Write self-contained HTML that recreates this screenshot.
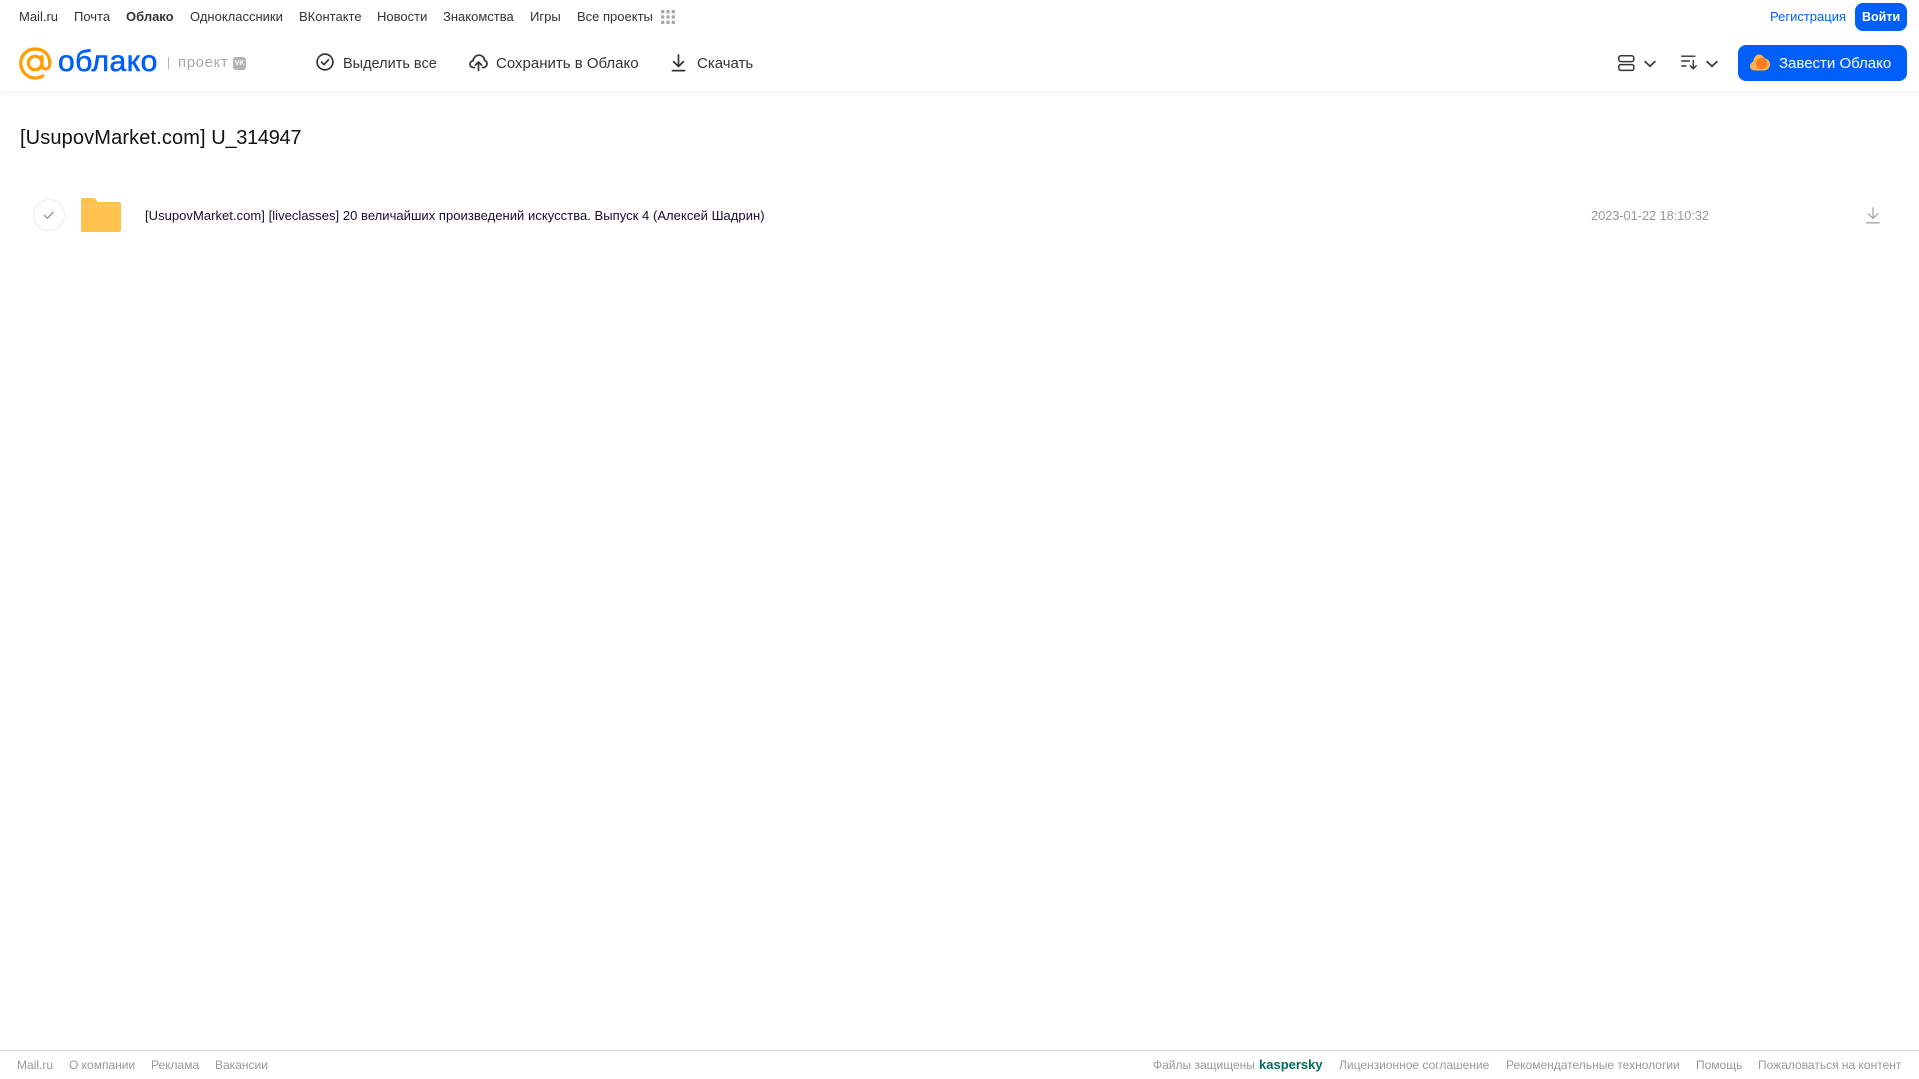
<!DOCTYPE html>
<html lang="ru">
<head>
<meta charset="utf-8">
<title>Облако</title>
<style>
html,body{margin:0;padding:0;background:#fff;}
body{position:relative;width:1919px;height:1079px;overflow:hidden;font-family:"Liberation Sans",Arial,sans-serif;}
.t{position:absolute;white-space:nowrap;line-height:16px;}
.n{top:9px;font-size:13px;color:#333;}
.a{top:56px;font-size:15px;color:#333;}
.f{top:1057px;font-size:12px;color:#999;}
svg{position:absolute;overflow:visible;}
#hdr{position:absolute;left:0;top:0;width:1919px;height:91px;background:#fff;box-shadow:0 1px 7px rgba(0,0,0,.08);}
#line{position:absolute;left:0;top:1050px;width:1919px;height:1px;background:#d9d9d9;}
.btn{position:absolute;background:#005ff9;border-radius:8px;}
</style>
</head>
<body>
<div id="hdr"></div>

<span class="t n" style="left:19px">Mail.ru</span>
<span class="t n" style="left:74px">Почта</span>
<span class="t n" style="left:126px;font-weight:bold">Облако</span>
<span class="t n" style="left:190px">Одноклассники</span>
<span class="t n" style="left:299px">ВКонтакте</span>
<span class="t n" style="left:377px">Новости</span>
<span class="t n" style="left:443px">Знакомства</span>
<span class="t n" style="left:530px">Игры</span>
<span class="t n" style="left:577px">Все проекты</span>
<svg style="left:661px;top:10px" width="14" height="14" viewBox="0 0 15 15" fill="#a8a8a8">
<rect x="0" y="0" width="3.6" height="3.6" rx=".8"/><rect x="5.7" y="0" width="3.6" height="3.6" rx=".8"/><rect x="11.4" y="0" width="3.6" height="3.6" rx=".8"/>
<rect x="0" y="5.7" width="3.6" height="3.6" rx=".8"/><rect x="5.7" y="5.7" width="3.6" height="3.6" rx=".8"/><rect x="11.4" y="5.7" width="3.6" height="3.6" rx=".8"/>
<rect x="0" y="11.4" width="3.6" height="3.6" rx=".8"/><rect x="5.7" y="11.4" width="3.6" height="3.6" rx=".8"/><rect x="11.4" y="11.4" width="3.6" height="3.6" rx=".8"/>
</svg>

<span class="t" style="left:1770px;top:9px;font-size:13px;color:#005ff9">Регистрация</span>
<div class="btn" style="left:1855px;top:3px;width:52px;height:28px"></div>
<span class="t" style="left:1862px;top:9px;font-size:12.5px;font-weight:bold;color:#fff">Войти</span>

<!-- logo -->
<svg style="left:19px;top:47px" width="33" height="33" viewBox="0 0 33 33" fill="none">
<circle cx="16.2" cy="16" r="6.8" stroke="#ff9e00" stroke-width="3.2"/>
<path d="M23 9.600v8.600c0 5.200 7.400 5.200 7.700-.8.600-9.600-5.800-15.400-14.500-15.400C7.700 2 1.800 8.400 1.800 16.200c0 8 6.300 14.800 14.400 14.800 2.900 0 5.400-.7 7.600-2.100" stroke="#ff9e00" stroke-width="3.200" stroke-linecap="round"/>
</svg>
<span class="t" style="left:58px;top:45px;line-height:34px;font-size:30px;color:#005ff9;font-weight:normal;-webkit-text-stroke:.6px #005ff9;letter-spacing:.5px">облако</span>
<div style="position:absolute;left:168px;top:57px;width:1px;height:12px;background:#b5b5b5"></div>
<span class="t" style="left:178px;top:55px;font-size:15px;color:#aaa;letter-spacing:.6px">проект</span>
<div style="position:absolute;left:233px;top:57px;width:13px;height:13px;background:#b3b3b3;border-radius:3px;color:#fff;font-size:7px;font-weight:bold;line-height:13px;text-align:center">VK</div>

<!-- actions -->
<svg style="left:316px;top:53px" width="18" height="18" viewBox="0 0 18 18" fill="none" stroke="#333" stroke-width="1.7" stroke-linecap="round" stroke-linejoin="round">
<circle cx="9" cy="9" r="7.9"/><path d="M5.6 9.2l2.4 2.400 4.400-4.800"/>
</svg>
<span class="t a" style="left:343px;font-size:14.5px">Выделить все</span>
<svg style="left:469px;top:54px" width="19" height="17" viewBox="0 0 19 17" fill="none" stroke="#333" stroke-width="1.7" stroke-linecap="round" stroke-linejoin="round">
<path d="M5.500 13.500H4.400C2.400 13.500 1 12 1 10.200c0-1.700 1.300-3.100 3-3.300C4.500 3.600 6.900 1.200 10 1.200c3 0 5.300 2.200 5.600 5.100 1.400.4 2.400 1.700 2.400 3.300 0 2.100-1.500 3.900-3.500 3.900h-1"/>
<path d="M9.500 16.500V8.200M6.400 11l3.100-3 3.100 3"/>
</svg>
<span class="t a" style="left:496px">Сохранить в Облако</span>
<svg style="left:671px;top:54px" width="15" height="18" viewBox="0 0 15 18" fill="none" stroke="#333" stroke-width="1.7" stroke-linecap="round" stroke-linejoin="round">
<path d="M7.500 1v11M2.600 7.600l4.900 4.900 4.900-4.900M1.400 16.600h12.200"/>
</svg>
<span class="t a" style="left:697px">Скачать</span>

<!-- view / sort -->
<svg style="left:1618px;top:55px" width="17" height="17" viewBox="0 0 17 17" fill="none" stroke="#333" stroke-width="1.500">
<rect x=".8" y=".8" width="15" height="5.800" rx="2"/><rect x=".8" y="9.600" width="15" height="5.800" rx="2"/>
</svg>
<svg style="left:1644px;top:60px" width="12" height="8" viewBox="0 0 13 8" fill="none" stroke="#333" stroke-width="1.800" stroke-linecap="round" stroke-linejoin="round">
<path d="M1.200 1.400l5.300 5 5.300-5"/>
</svg>
<svg style="left:1681px;top:55px" width="17" height="15" viewBox="0 0 17 15" fill="none" stroke="#333" stroke-width="1.400" stroke-linecap="round" stroke-linejoin="round">
<path d="M.8 1.200h13M.8 6h7.600M.8 11h4M12.200 5.600v8M9.200 10.800l3 3 3-3"/>
</svg>
<svg style="left:1706px;top:60px" width="12" height="8" viewBox="0 0 13 8" fill="none" stroke="#333" stroke-width="1.800" stroke-linecap="round" stroke-linejoin="round">
<path d="M1.200 1.400l5.300 5 5.300-5"/>
</svg>

<div class="btn" style="left:1738px;top:45px;width:169px;height:36px"></div>
<svg style="left:1750px;top:54px" width="20" height="17" viewBox="0 0 20 17">
<path d="M4.500 16.500C2 16.500 0 14.500 0 12c0-2 1.300-3.700 3.200-4.300C3.600 3.500 6.300.5 9 .5c2.500 0 4.500 1.600 5.300 3.800 3.200.3 5.700 2.900 5.700 6.100 0 3.400-2.700 6.100-6 6.100z" fill="#ffb34d"/>
<circle cx="11.500" cy="9.500" r="5.500" fill="#ff7a1f"/>
</svg>
<span class="t" style="left:1779px;top:56px;font-size:15px;color:#fff">Завести Облако</span>

<!-- title -->
<span class="t" style="left:20px;top:126px;line-height:24px;font-size:20px;color:#111"><span style="letter-spacing:.13px">[UsupovMarket.com]</span> <span style="letter-spacing:-.3px">U_314947</span></span>

<!-- row -->
<svg style="left:33px;top:199px" width="32" height="32" viewBox="0 0 32 32" fill="none">
<circle cx="16" cy="16" r="15.500" stroke="#ececec"/>
<path d="M11.500 16.500l3 2.800 5.500-6" stroke="#9a9a9a" stroke-width="1.500" stroke-linecap="round" stroke-linejoin="round"/>
</svg>
<svg style="left:81px;top:198px" width="40" height="34" viewBox="0 0 40 34">
<path d="M2.500 0H12c1.500 0 2.400.6 3.200 1.700L16.500 4H37.500C39 4 40 5 40 6.500V31.500C40 33 39 34 37.500 34H2.500C1 34 0 33 0 31.500V2.500C0 1 1 0 2.500 0z" fill="#ffc04d"/>
<rect x="0" y="8" width="40" height="26" rx="2" fill="#ffc24f"/>
<rect x="0" y="7.500" width="40" height="1" fill="#ffcf78"/>
</svg>
<span class="t" style="left:145px;top:208px;font-size:13px;letter-spacing:.04px;color:#1a0a2e">[UsupovMarket.com] [liveclasses] 20 величайших произведений искусства. Выпуск 4 (Алексей Шадрин)</span>
<span class="t" style="left:1591px;top:208px;font-size:13px;letter-spacing:-.15px;color:#999">2023-01-22 18:10:32</span>
<svg style="left:1866px;top:207px" width="14" height="17" viewBox="0 0 14 17" fill="none" stroke="#a6a6a6" stroke-width="1.300" stroke-linecap="round" stroke-linejoin="round">
<path d="M7 .8v10.400M2.400 6.800L7 11.400l4.600-4.600M.8 15.800h12.400"/>
</svg>

<!-- footer -->
<div id="line"></div>
<span class="t f" style="left:17px">Mail.ru</span>
<span class="t f" style="left:69px">О компании</span>
<span class="t f" style="left:151px">Реклама</span>
<span class="t f" style="left:215px">Вакансии</span>
<span class="t f" style="left:1153px">Файлы защищены</span>
<span class="t f" style="left:1259px;font-size:13px;font-weight:bold;color:#006d5c">kaspersky</span>
<span class="t f" style="left:1339px">Лицензионное соглашение</span>
<span class="t f" style="left:1506px">Рекомендательные технологии</span>
<span class="t f" style="left:1696px">Помощь</span>
<span class="t f" style="left:1758px">Пожаловаться на контент</span>
</body>
</html>
